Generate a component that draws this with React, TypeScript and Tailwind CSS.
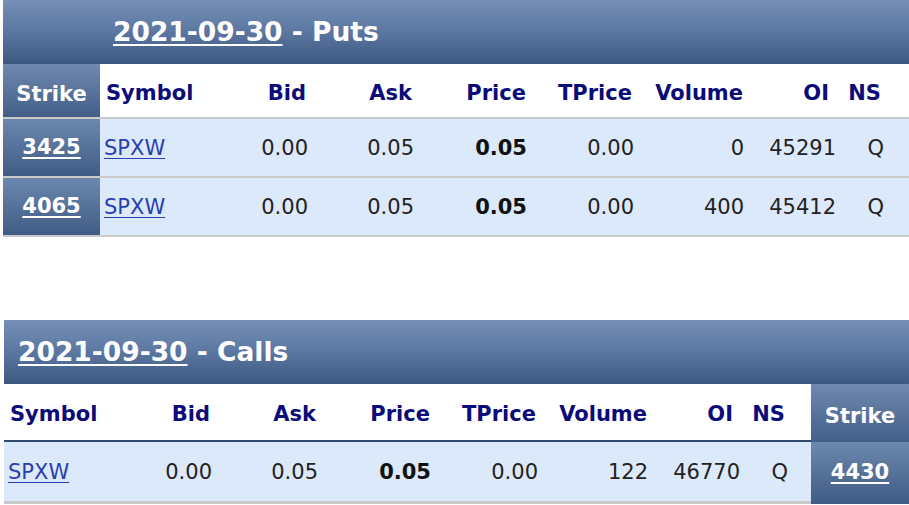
import React from "react";

const W = [126, 86, 106, 113, 107, 110, 92, 67];
const HEAD = ["Symbol", "Bid", "Ask", "Price", "TPrice", "Volume", "OI", "NS"];
const HPAD = ["pl-[6px]", "pr-[6px]", "pr-[6px]", "pr-[5px]", "pr-[6px]", "pr-[5px]", "pr-[11px]", "pr-[26px]"];
const DPAD = ["pl-[4px]", "pr-[4px]", "pr-[4px]", "pr-[4px]", "pr-[4px]", "pr-[4px]", "pr-[4px]", "pr-[23px]"];

type RowData = { strike: string; vals: string[] };

const font = { fontFamily: '"DejaVu Sans", Verdana, sans-serif' };

function HeaderCells() {
  return (
    <>
      {HEAD.map((h, i) => (
        <div
          key={h}
          style={{ width: W[i] }}
          className={`shrink-0 flex items-center pt-[6px] ${i === 0 ? "justify-start" : "justify-end"} ${HPAD[i]} text-[21px] font-bold text-[#0b0b7a]`}
        >
          {h}
        </div>
      ))}
    </>
  );
}

function DataCells({ vals }: { vals: string[] }) {
  return (
    <>
      {vals.map((v, i) => (
        <div
          key={i}
          style={{ width: W[i] }}
          className={`shrink-0 flex items-center pt-[2px] ${i === 0 ? "justify-start" : "justify-end"} ${DPAD[i]} text-[21px] ${
            i === 3 ? "font-bold text-[#111]" : "text-[#222]"
          }`}
        >
          {i === 0 ? (
            <span className="text-[#2a3fae] underline decoration-1 underline-offset-[3px]">{v}</span>
          ) : (
            v
          )}
        </div>
      ))}
    </>
  );
}

function StrikeHead({ w }: { w: number }) {
  return (
    <div
      style={{ width: w }}
      className="shrink-0 flex items-center justify-center pt-[8px] bg-linear-to-b from-[#7089af] to-[#435f88] text-white text-[21px] font-bold"
    >
      Strike
    </div>
  );
}

function StrikeCell({ w, v }: { w: number; v: string }) {
  return (
    <div
      style={{ width: w }}
      className="shrink-0 flex items-center justify-center bg-linear-to-b from-[#6d88ae] to-[#405c85] text-white text-[21px] font-bold"
    >
      <span className="underline decoration-2 underline-offset-[3px]">{v}</span>
    </div>
  );
}

function TitleBar({ label, pl }: { label: string; pl: string }) {
  return (
    <div
      className={`h-[64px] flex items-center ${pl} bg-linear-to-b from-[#7690b6] via-[#5b77a1] to-[#3d5880] text-white text-[26.5px] font-bold`}
    >
      <span className="underline decoration-2 underline-offset-[3px]">2021-09-30</span>
      <span>&nbsp;- {label}</span>
    </div>
  );
}

export default function App() {
  const puts: RowData[] = [
    { strike: "3425", vals: ["SPXW", "0.00", "0.05", "0.05", "0.00", "0", "45291", "Q"] },
    { strike: "4065", vals: ["SPXW", "0.00", "0.05", "0.05", "0.00", "400", "45412", "Q"] },
  ];
  const calls: RowData[] = [
    { strike: "4430", vals: ["SPXW", "0.00", "0.05", "0.05", "0.00", "122", "46770", "Q"] },
  ];
  return (
    <div style={font} className="w-[909px] h-[505px] bg-white overflow-hidden">
      {/* Puts */}
      <div className="ml-[3px]">
        <TitleBar label="Puts" pl="pl-[110px]" />
        <div className="flex h-[55px] border-b-2 border-[#c9c9c9]">
          <StrikeHead w={97} />
          <HeaderCells />
        </div>
        {puts.map((r) => (
          <div key={r.strike} className="flex h-[59px] border-b-2 border-[#c9c9c9] bg-[#dce9fa]">
            <StrikeCell w={97} v={r.strike} />
            <DataCells vals={r.vals} />
          </div>
        ))}
      </div>

      {/* Calls */}
      <div className="ml-[4px] mt-[83px]">
        <TitleBar label="Calls" pl="pl-[14px]" />
        <div className="flex h-[58px]">
          <div className="flex border-b-2 border-[#2f4a6e]">
            <HeaderCells />
          </div>
          <StrikeHead w={98} />
        </div>
        {calls.map((r) => (
          <div key={r.strike} className="flex h-[62px]">
            <div className="flex bg-[#dce9fa] border-b-[3px] border-[#c9c9c9]">
              <DataCells vals={r.vals} />
            </div>
            <StrikeCell w={98} v={r.strike} />
          </div>
        ))}
      </div>
    </div>
  );
}
